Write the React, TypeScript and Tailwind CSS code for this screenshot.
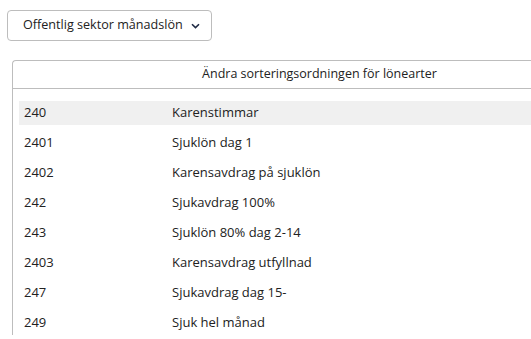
import React from 'react';

const rows = [
  { code: '240', name: 'Karenstimmar' },
  { code: '2401', name: 'Sjuklön dag 1' },
  { code: '2402', name: 'Karensavdrag på sjuklön' },
  { code: '242', name: 'Sjukavdrag 100%' },
  { code: '243', name: 'Sjuklön 80% dag 2-14' },
  { code: '2403', name: 'Karensavdrag utfyllnad' },
  { code: '247', name: 'Sjukavdrag dag 15-' },
  { code: '249', name: 'Sjuk hel månad' },
];

export default function App() {
  return (
    <div className="w-[531px] h-[339px] overflow-hidden bg-white text-[#222] font-['Open_Sans',sans-serif]">
      <div className="pt-[10px] pl-[7px]">
        <button className="flex items-center justify-between h-[31px] w-[205px] pl-[15px] pr-[11px] border border-[#bdbdbd] rounded-[4px] bg-white text-[12.6px] whitespace-nowrap">
          <span className="leading-none">Offentlig sektor månadslön</span>
          <svg className="shrink-0 w-[9px] h-[6px]" viewBox="0 0 9 6" fill="none">
            <path d="M1 1.2 L4.5 4.6 L8 1.2" stroke="#1f2a44" strokeWidth="1.6" />
          </svg>
        </button>
      </div>

      <div className="mt-[19px] ml-[12px] w-[614px] border-l border-t border-[#bdbdbd] rounded-tl-[4px]">
        <div className="h-[28px] flex items-center justify-center border-b border-[#bdbdbd] text-[12.5px]">
          Ändra sorteringsordningen för lönearter
        </div>
        <div className="pt-[12px] pl-[6px] flex flex-col gap-[6px]">
          {rows.map((r, i) => (
            <div
              key={r.code}
              className={`h-[24px] flex items-center text-[13px] ${i === 0 ? 'bg-[#f0f0f0]' : ''}`}
            >
              <span className="w-[153px] pl-[5px]">{r.code}</span>
              <span>{r.name}</span>
            </div>
          ))}
        </div>
      </div>
    </div>
  );
}
